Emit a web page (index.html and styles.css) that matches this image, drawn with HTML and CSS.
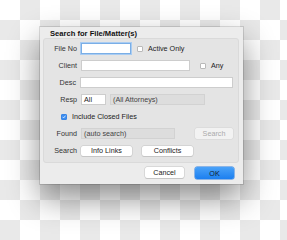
FILE: index.html
```html
<!DOCTYPE html>
<html lang="en">
<head>
    <meta charset="UTF-8">
    <title>Search for File/Matter(s)</title>
    <link rel="stylesheet" href="styles.css">
</head>
<body>
    <div class="dialog">
        <div class="dialog__title">Search for File/Matter(s)</div>
        <div class="dialog__group">
            <div class="row">
                <span class="row__label">File No</span>
                <div class="row__body">
                    <span class="field field--focus field--file"></span>
                    <span class="check"><span class="check__box"></span>Active Only</span>
                </div>
            </div>
            <div class="row">
                <span class="row__label">Client</span>
                <div class="row__body">
                    <span class="field field--client"></span>
                    <span class="check check--any"><span class="check__box"></span>Any</span>
                </div>
            </div>
            <div class="row">
                <span class="row__label">Desc</span>
                <div class="row__body">
                    <span class="field field--wide"></span>
                </div>
            </div>
            <div class="row">
                <span class="row__label">Resp</span>
                <div class="row__body">
                    <span class="field field--resp">All</span>
                    <span class="field field--readonly field--attorneys">(All Attorneys)</span>
                </div>
            </div>
            <div class="row">
                <span class="row__label"></span>
                <div class="row__body row__body--shift">
                    <span class="check"><span class="check__box check__box--on">
                        <svg width="6" height="6" viewBox="0 0 6 6"><path d="M1.2 3.1 L2.5 4.4 L4.9 1.4" fill="none" stroke="#fff" stroke-width="1.1" stroke-linecap="round" stroke-linejoin="round"/></svg>
                    </span>Include Closed Files</span>
                </div>
            </div>
            <div class="row">
                <span class="row__label">Found</span>
                <div class="row__body">
                    <span class="field field--readonly field--found">(auto search)</span>
                    <button class="button button--disabled button--search">Search</button>
                </div>
            </div>
            <div class="row">
                <span class="row__label">Search</span>
                <div class="row__body">
                    <button class="button button--link">Info Links</button>
                    <button class="button button--link">Conflicts</button>
                </div>
            </div>
        </div>
        <div class="dialog__footer">
            <button class="button button--footer">Cancel</button>
            <button class="button button--footer button--ok">OK</button>
        </div>
    </div>
</body>
</html>
```

FILE: styles.css
```css
* {
    margin: 0;
    padding: 0;
    box-sizing: border-box;
}

body {
    width: 287px;
    height: 240px;
    padding: 27px 0 0 40px;
    overflow: hidden;
    background: repeating-conic-gradient(#e9e9e9 0 25%, #fff 0 50%) 0 0 / 40px 40px;
    font-family: "Liberation Sans", Arial, sans-serif;
    font-size: 7.2px;
    color: #222;
}

.dialog {
    width: 203px;
    height: 157px;
    padding: 0 4px 0 3px;
    background: #ececec;
    box-shadow: 0 14px 30px rgba(0, 0, 0, 0.45), 0 0 0 1px rgba(0, 0, 0, 0.12);
}

.dialog__title {
    height: 11px;
    padding: 3px 0 0 7px;
    font-weight: bold;
    font-size: 7.6px;
    line-height: 8px;
    color: #111;
}

.dialog__group {
    display: flex;
    flex-direction: column;
    gap: 6px;
    height: 125px;
    padding: 4px 5px 0 6px;
    border: 1px solid #dadada;
    border-radius: 3px;
    background: #e4e4e4;
}

.row {
    display: flex;
    align-items: center;
    gap: 4px;
    height: 11px;
}

.row__label {
    width: 27px;
    text-align: right;
    color: #333;
}

.row__body {
    display: flex;
    align-items: center;
    flex: 1;
}

.row__body--shift {
    margin-left: -26px;
}

.field {
    display: block;
    height: 11px;
    padding: 0 2px;
    border: 1px solid #cdcdcd;
    background: #fff;
    line-height: 9px;
    color: #222;
}

.field--focus {
    border-color: #7aaee6;
    box-shadow: 0 0 0 1px #a9ccf2;
}

.field--file {
    width: 50px;
}

.field--client {
    width: 109px;
}

.field--wide {
    width: 153px;
}

.field--resp {
    width: 25px;
}

.field--readonly {
    background: #dddddd;
    border-color: #d2d2d2;
    color: #444;
}

.field--attorneys {
    width: 95px;
    margin-left: 4px;
}

.field--found {
    width: 94px;
}

.check {
    display: flex;
    align-items: center;
    gap: 5px;
    margin-left: 6px;
}

.check--any {
    margin-left: 10px;
}

.check__box {
    display: flex;
    align-items: center;
    justify-content: center;
    width: 6px;
    height: 6px;
    border: 1px solid #b9b9b9;
    border-radius: 1px;
    background: #fff;
}

.check__box--on {
    border-color: #3a86e6;
    background: #3d8ef0;
}

.button {
    height: 11px;
    border: 0;
    border-radius: 2px;
    background: #fff;
    box-shadow: 0 0 0 0.5px #c4c4c4, 0 1px 0 #c9c9c9;
    font-family: inherit;
    font-size: 7.2px;
    color: #222;
}

.button--disabled {
    background: #f2f2f2;
    color: #aaa;
    box-shadow: 0 0 0 0.5px #d4d4d4;
}

.button--search {
    width: 38px;
    margin-left: 20px;
}

.button--link {
    width: 51px;
    height: 10px;
    margin-right: 10px;
}

.dialog__footer {
    display: flex;
    justify-content: flex-end;
    gap: 11px;
    padding: 4px 5px 0 0;
}

.button--footer {
    width: 39px;
    height: 11px;
}

.button--ok {
    height: 12px;
    background: linear-gradient(#4aa2f8, #1c7ff0);
    box-shadow: 0 0 0 0.5px #2b7de0;
    color: #102030;
}
```
